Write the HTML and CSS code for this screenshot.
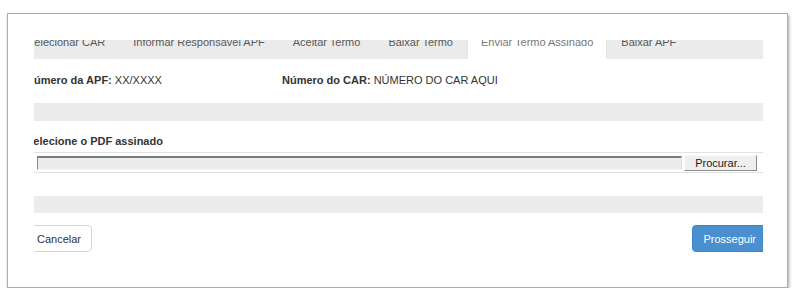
FILE: index.html
```html
<!DOCTYPE html>
<html lang="pt-BR">
<head>
    <meta charset="UTF-8">
    <meta name="viewport" content="width=device-width, initial-scale=1.0">
    <title>Enviar Termo Assinado</title>
    <link rel="stylesheet" href="styles.css">
</head>
<body>

    <div class="frame">
        <div class="viewport">
            <div class="wizard">
                <ul class="tabs">
                    <li>Selecionar CAR</li>
                    <li>Informar Responsável APF</li>
                    <li>Aceitar Termo</li>
                    <li>Baixar Termo</li>
                    <li class="active">Enviar Termo Assinado</li>
                    <li>Baixar APF</li>
                </ul>

                <form class="step" id="stepForm">
                    <div class="info-row">
                        <div><b>Número da APF:</b> XX/XXXX</div>
                        <div><b>Número do CAR:</b> NÚMERO DO CAR AQUI</div>
                    </div>

                    <div class="bar bar-first"></div>

                    <label class="field-label" for="pdf">Selecione o PDF assinado</label>
                    <div class="file-row">
                        <span class="file-box"></span>
                        <button type="button" class="file-btn">Procurar...</button>
                    </div>

                    <div class="bar bar-second"></div>

                    <div class="actions">
                        <button type="button" class="btn">Cancelar</button>
                        <button type="submit" class="btn btn-primary">Prosseguir</button>
                    </div>
                </form>
            </div>
        </div>
    </div>

</body>
</html>
```

FILE: styles.css
```css
body {
    margin: 0;
    background-color: white;
    font-family: "Liberation Sans", Arial, sans-serif;
    font-size: 11px;
    line-height: 15px;
    color: #333;
}
.frame {
    width: 781px;
    height: 275px;
    margin: 13px 0 0 7px;
    padding: 26px 0 0 26px;
    box-sizing: border-box;
    border: 1px solid #acacac;
    box-shadow: 1px 2px 3px rgba(0,0,0,0.35);
    background-color: white;
}
.viewport {
    width: 729px;
    height: 248px;
    overflow: hidden;
}
.wizard {
    width: 754px;
    margin: -14px 0 0 -21px;
}
.tabs {
    display: flex;
    margin: 0;
    padding: 0;
    list-style: none;
    background-color: #ebebeb;
}
.tabs li {
    padding: 9px 14px;
    color: #5a5a5a;
    white-space: nowrap;
}
.tabs li.active {
    background-color: white;
    color: #777;
    box-shadow: inset 1px 0 0 #e4e4e4, inset -1px 0 0 #e4e4e4;
}
.step {
    padding-left: 13px;
}
.info-row {
    display: grid;
    grid-template-columns: 256px 1fr;
    margin-top: 14px;
}
.bar {
    background-color: #ececec;
}
.bar-first {
    height: 18px;
    margin-top: 15px;
}
.field-label {
    display: block;
    margin-top: 13px;
    font-weight: bold;
}
.file-row {
    display: flex;
    align-items: center;
    gap: 2px;
    height: 19px;
    margin-top: 3px;
    padding: 0 10px 0 11px;
    border-top: 1px solid #e2e2e2;
    border-bottom: 1px solid #e2e2e2;
}
.file-box {
    flex: 1;
    height: 14px;
    box-sizing: border-box;
    background-color: #ececec;
    border-top: 2px solid #7a7a7a;
    border-left: 1px solid #8a8a8a;
    border-right: 1px solid #dedede;
    border-bottom: 1px solid #f4f4f4;
}
.file-btn {
    width: 73px;
    height: 16px;
    padding: 0;
    font-family: inherit;
    font-size: 11px;
    line-height: 14px;
    color: #222;
    background-color: #efefef;
    border: 1px solid;
    border-color: #fafafa #8c8c8c #8c8c8c #fafafa;
}
.bar-second {
    height: 17px;
    margin-top: 23px;
}
.actions {
    display: flex;
    justify-content: space-between;
    margin-top: 12px;
}
.btn {
    height: 27px;
    padding: 0 10px;
    font-family: inherit;
    font-size: 11px;
    color: #333;
    background-color: white;
    border: 1px solid #d6d6d6;
    border-radius: 4px;
    cursor: pointer;
}
.btn-primary {
    color: white;
    background-color: #4a8fd0;
    border-color: #3f84c6;
}
```
